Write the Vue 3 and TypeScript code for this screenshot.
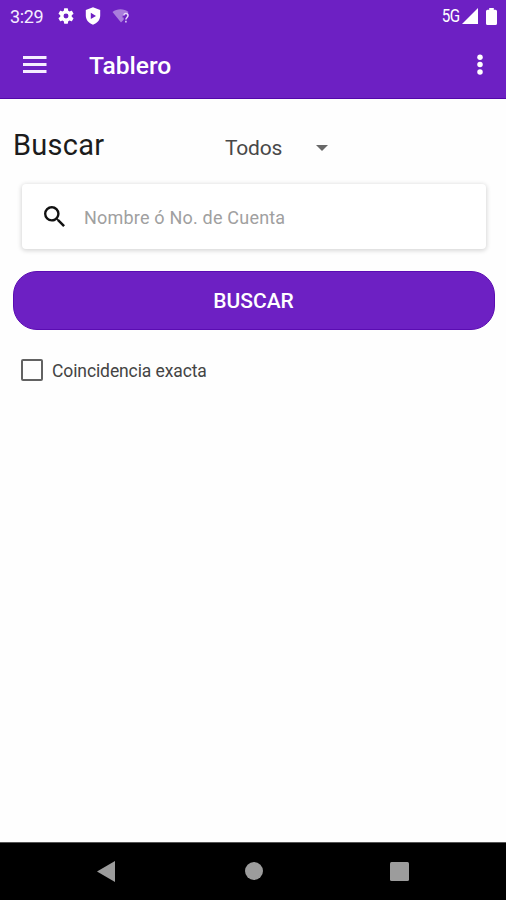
<script setup lang="ts">
import { ref } from 'vue'

const query = ref('')
const filter = ref('Todos')
const exact = ref(false)
</script>

<template>
  <div class="screen">
    <header class="top">
      <div class="status">
        <span class="time">3:29</span>
        <svg class="gear" viewBox="2 2 20 20"><path fill="#fff" fill-rule="evenodd" d="M19.14 12.94c.04-.3.06-.61.06-.94s-.02-.64-.07-.94l2.03-1.58a.49.49 0 0 0 .12-.61l-1.92-3.32a.488.488 0 0 0-.59-.22l-2.39.96c-.5-.38-1.03-.7-1.62-.94l-.36-2.54a.484.484 0 0 0-.48-.41h-3.84c-.24 0-.43.17-.47.41l-.36 2.54c-.59.24-1.13.57-1.62.94l-2.39-.96c-.22-.08-.47 0-.59.22L2.74 8.87c-.12.21-.08.47.12.61l2.03 1.58c-.05.3-.09.63-.09.94s.02.64.07.94l-2.03 1.58a.49.49 0 0 0-.12.61l1.92 3.32c.12.22.37.29.59.22l2.39-.96c.5.38 1.03.7 1.62.94l.36 2.54c.05.24.24.41.48.41h3.84c.24 0 .44-.17.47-.41l.36-2.54c.59-.24 1.13-.56 1.62-.94l2.39.96c.22.08.47 0 .59-.22l1.92-3.32c.12-.22.07-.47-.12-.61zM12 15.1a3.1 3.1 0 1 1 0-6.2 3.1 3.1 0 0 1 0 6.2z" /></svg>
        <svg class="shield" viewBox="0 0 16 18"><path fill="#fff" fill-rule="evenodd" d="M8 .3 15.2 3v5.5c0 4.4-3 7.7-7.2 9.2C3.800 16.200.8 12.900.8 8.500V3zM5.800 5.800v6.200L11 8.900z" /></svg>
        <svg class="wifi" viewBox="0 0 18 16"><path fill="#fff" fill-opacity=".42" d="M.5 4C5 .3 12 .3 16.500 4L15 6c-3-.8-4.500 1-4.500 3.500h1.200v2.200L9 14.500z" /><path fill="none" stroke="#e8d9fb" stroke-width="1.500" d="M11.800 7.500c0-2.700 4.200-2.600 4.200.1 0 1.900-2.100 1.800-2.100 4M13.900 12.800v1.700" /></svg>
        <span class="network">5G</span>
        <svg class="signal" viewBox="0 0 16 16"><path fill="#fff" d="M16 0v16H0z" /></svg>
        <svg class="battery" viewBox="0 0 11 17"><path fill="#fff" d="M3.200 0h4.600v1.700H9.500q1.500 0 1.500 1.500V15.500q0 1.500-1.500 1.500h-8Q0 17 0 15.500V3.200Q0 1.700 1.500 1.700h1.700z" /></svg>
      </div>
      <div class="toolbar">
        <svg class="menu" viewBox="0 0 24 18"><path fill="#f5edff" d="M0 0h23.500v3H0zM0 7h23.500v3H0zM0 14h23.500v3H0z" /></svg>
        <h1>Tablero</h1>
        <svg class="more" viewBox="0 0 6 22"><g fill="#fff"><circle cx="3" cy="3.200" r="2.750" /><circle cx="3" cy="10.600" r="2.750" /><circle cx="3" cy="18" r="2.750" /></g></svg>
      </div>
    </header>

    <main>
      <div class="heading">
        <h2>Buscar</h2>
        <div class="select">
          <span>{{ filter }}</span>
          <svg viewBox="0 0 12 6"><path fill="#686868" d="M0 0h12L6 6z" /></svg>
        </div>
      </div>
      <label class="search">
        <svg viewBox="3 3 17.500 17.500"><path fill="#111" d="M15.500 14h-.79l-.28-.27A6.471 6.471 0 0 0 16 9.500 6.500 6.500 0 1 0 9.500 16c1.610 0 3.090-.59 4.230-1.570l.27.280v.79l5 4.990L20.490 19zm-6 0C7.010 14 5 11.990 5 9.500S7.010 5 9.500 5 14 7.010 14 9.500 11.990 14 9.500 14z" /></svg>
        <input v-model="query" type="text" placeholder="Nombre ó No. de Cuenta" />
      </label>
      <button class="submit" type="button">BUSCAR</button>
      <label class="exact">
        <input v-model="exact" type="checkbox" />
        <span>Coincidencia exacta</span>
      </label>
    </main>

    <nav>
      <svg class="back" viewBox="0 0 18 21"><path fill="#9c9c9c" d="M18 0v21L0 10.500z" /></svg>
      <svg class="home" viewBox="0 0 18 18"><circle cx="9" cy="9" r="9" fill="#9c9c9c" /></svg>
      <svg class="recent" viewBox="0 0 19 19"><rect width="19" height="19" rx="1.500" fill="#9c9c9c" /></svg>
    </nav>
  </div>
</template>

<style>
body {
  margin: 0;
  background: #fff;
}
</style>

<style scoped>
.screen {
  display: flex;
  flex-direction: column;
  width: 506px;
  height: 900px;
  overflow: hidden;
  font-family: Roboto, "Liberation Sans", sans-serif;
  background: #fefefe;
}
svg {
  display: block;
  flex: none;
}
.top {
  height: 99px;
  box-sizing: border-box;
  color: #fff;
  background: #6d20c3;
  border-bottom: 1px solid #5307a9;
}
.status {
  display: flex;
  align-items: center;
  height: 32px;
  padding: 0 9px 0 10px;
}
.time {
  width: 48px;
  font-size: 18px;
  letter-spacing: -0.4px;
  color: #f5edff;
}
.gear {
  width: 16px;
  height: 16px;
}
.shield {
  width: 16px;
  height: 18px;
  margin-left: 11px;
}
.wifi {
  width: 18px;
  height: 16px;
  margin-left: 11px;
}
.network {
  margin-left: auto;
  font-size: 17.500px;
  letter-spacing: -0.5px;
  transform: scaleX(0.87);
  transform-origin: right center;
}
.signal {
  width: 16px;
  height: 16px;
  margin-left: 2px;
}
.battery {
  width: 11px;
  height: 17px;
  margin-left: 8px;
}
.toolbar {
  display: flex;
  align-items: center;
  height: 66px;
  padding: 0 23px;
}
.menu {
  width: 24px;
  height: 18px;
}
h1 {
  margin: 2px auto 0 42px;
  font-size: 24.600px;
  font-weight: 500;
  line-height: 30px;
}
.more {
  width: 6px;
  height: 22px;
}
main {
  flex: 1;
}
.heading {
  display: flex;
  align-items: center;
  height: 85px;
  padding-left: 13px;
}
h2 {
  width: 212px;
  margin: 7px 0 0;
  font-size: 29px;
  font-weight: 400;
  letter-spacing: 0.25px;
  line-height: 36px;
  color: #1c1c1c;
}
.select {
  display: flex;
  align-items: center;
  justify-content: space-between;
  width: 103px;
  margin-top: 12px;
  font-size: 21px;
  letter-spacing: -0.2px;
  color: #484848;
}
.select svg {
  width: 12px;
  height: 6px;
}
.search {
  display: flex;
  align-items: center;
  box-sizing: border-box;
  width: 464px;
  height: 65px;
  margin-left: 22px;
  padding-left: 22px;
  border-radius: 4px;
  background: #fff;
  box-shadow: 0 1px 4px 1px rgba(0, 0, 0, 0.15);
}
.search svg {
  width: 21px;
  height: 21px;
}
.search input {
  flex: 1;
  margin: 2px 0 0 19px;
  padding: 0;
  border: 0;
  outline: 0;
  font: 400 18px Roboto, "Liberation Sans", sans-serif;
  letter-spacing: 0.2px;
  background: transparent;
}
.search input::placeholder {
  color: #a0a0a0;
  opacity: 1;
}
.submit {
  display: block;
  box-sizing: border-box;
  width: 482px;
  height: 58.500px;
  margin: 22px 0 0 12.500px;
  padding: 2px 0 0;
  border: 1px solid #5b0cb2;
  border-radius: 24px;
  font: 500 21px Roboto, "Liberation Sans", sans-serif;
  color: #fff;
  background: #6d20c3;
}
.exact {
  display: flex;
  align-items: center;
  margin: 28px 0 0 21px;
  font-size: 17.500px;
  letter-spacing: -0.1px;
  line-height: 24px;
  color: #444;
}
.exact input {
  appearance: none;
  box-sizing: border-box;
  width: 22px;
  height: 22px;
  margin: 0 9px 0 0;
  border: 2px solid #626262;
  border-radius: 2px;
}
.exact span {
  margin-top: 1px;
}
nav {
  display: flex;
  align-items: center;
  height: 58px;
  box-sizing: border-box;
  padding: 0 0 1px 97px;
  border-top: 1px solid #555;
  background: #000;
}
.back {
  width: 18px;
  height: 21px;
}
.home {
  width: 18px;
  height: 18px;
  margin-left: 129.500px;
}
.recent {
  width: 19px;
  height: 19px;
  margin-left: 127px;
}
</style>
